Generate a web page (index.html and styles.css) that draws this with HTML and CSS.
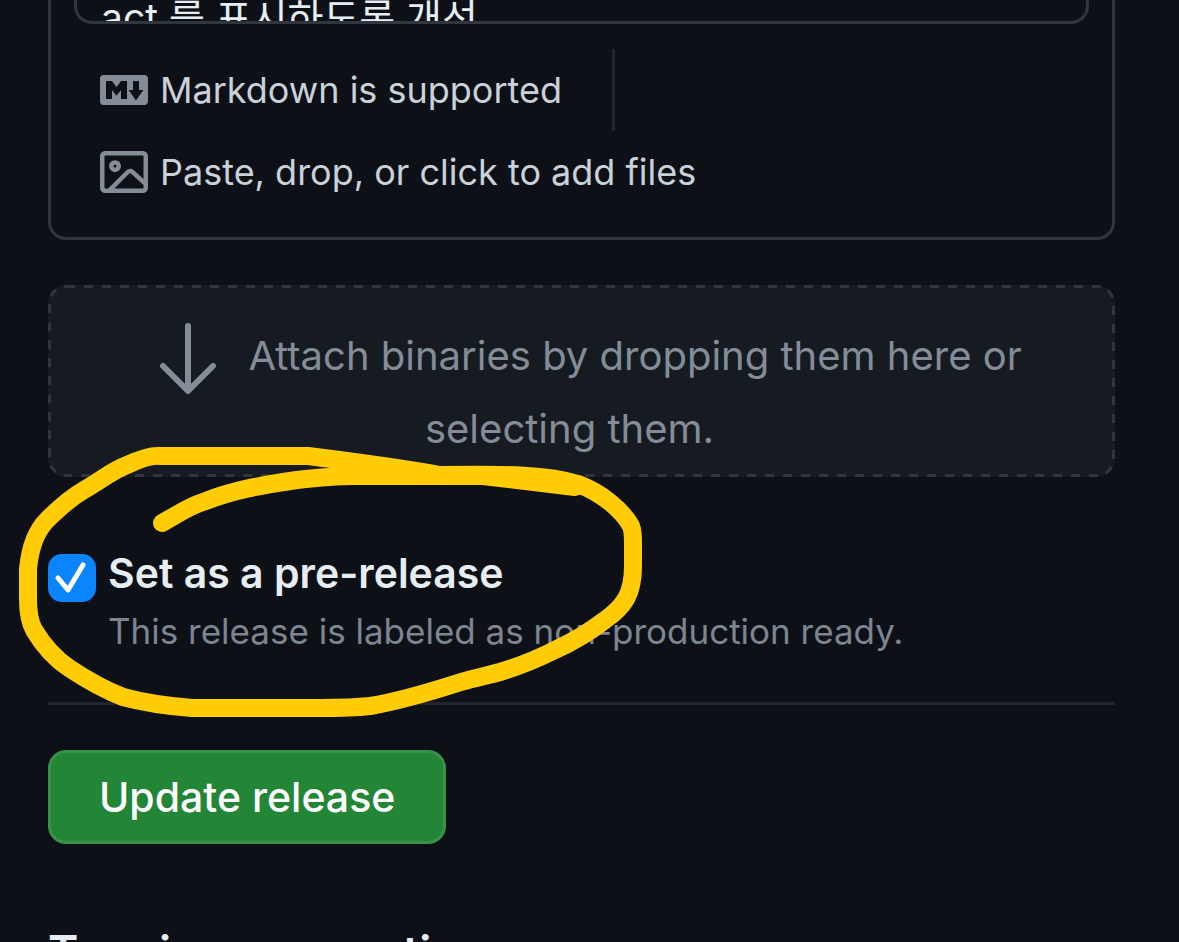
FILE: index.html
```html
<!DOCTYPE html>
<html lang="en">
<head>
  <meta charset="utf-8">
  <title>Edit release</title>
  <link rel="stylesheet" href="styles.css">
</head>
<body>
  <main class="page">
    <form>
      <div class="editor">
        <textarea class="editor-input" aria-label="Describe this release">act 를 표시하도록 개선</textarea>
        <div class="editor-footer">
          <a class="editor-link with-divider" href="#">
            <svg class="icon" viewBox="0 0 16 16" aria-hidden="true"><path d="M14.85 3c.63 0 1.15.52 1.14 1.15v7.7c0 .63-.51 1.15-1.15 1.15H1.15C.52 13 0 12.48 0 11.84V4.15C0 3.52.52 3 1.15 3ZM9 11V5H7L5.5 7 4 5H2v6h2V8l1.5 1.92L7 8v3Zm2.99.5L14.5 8H13V5h-2v3H9.5Z"/></svg>
            <span>Markdown is supported</span>
          </a>
          <button type="button" class="editor-link">
            <svg class="icon" viewBox="0 0 16 16" aria-hidden="true"><path d="M16 13.25A1.75 1.75 0 0 1 14.25 15H1.75A1.75 1.75 0 0 1 0 13.25V2.75C0 1.784.784 1 1.75 1h12.5c.966 0 1.75.784 1.75 1.75ZM1.75 2.5a.25.25 0 0 0-.25.25v10.5c0 .138.112.25.25.25h.94l.03-.03 6.077-6.078a1.75 1.75 0 0 1 2.412-.06L14.5 10.31V2.75a.25.25 0 0 0-.25-.25Zm12.5 11a.25.25 0 0 0 .25-.25v-.917l-4.298-3.889a.25.25 0 0 0-.344.009L4.81 13.5ZM7 6a2 2 0 1 1-3.999.001A2 2 0 0 1 7 6ZM5.5 6a.5.5 0 1 0-1 0 .5.5 0 0 0 1 0Z"/></svg>
            <span>Paste, drop, or click to add files</span>
          </button>
        </div>
      </div>

      <button type="button" class="dropzone">
        <svg class="dropzone-border" aria-hidden="true"><rect width="100%" height="100%" rx="18"/></svg>
        <svg class="dropzone-icon" viewBox="0 0 24 24" aria-hidden="true"><path d="M4.97 13.22a.75.75 0 0 1 1.06 0L11 18.19V3.75a.75.75 0 0 1 1.5 0v14.44l4.97-4.97a.749.749 0 0 1 1.275.326.749.749 0 0 1-.215.734l-6.25 6.25a.75.75 0 0 1-1.06 0l-6.25-6.25a.75.75 0 0 1 0-1.06Z"/></svg>
        <span class="dropzone-text">Attach binaries by dropping them here or selecting them.</span>
      </button>

      <div class="option">
        <span class="checkbox">
          <input type="checkbox" id="prerelease" aria-describedby="prerelease-note" checked>
          <svg viewBox="0 0 48 48" aria-hidden="true"><path d="M10 24l10 12L35 11"/></svg>
        </span>
        <div class="option-text">
          <label for="prerelease">Set as a pre-release</label>
          <p id="prerelease-note">This release is labeled as non-production ready.</p>
        </div>
        <!-- hand-drawn ring around the option -->
        <svg class="marker" viewBox="0 430 660 300" aria-hidden="true">
          <path d="M162 522C177 514 187 506 203 501C233 489 262 484 297 479C315 477 335 475 353 475H483L575 486"/>
          <path d="M440 474C510 473 548 474 578 483C602 492 622 509 631 525C633 530 633 536 633 542V565C633 592 625 605 605 619C592 629 577 639 555 649C537 658 517 666 500 671C485 675 474 677 461 681C433 690 401 700 370 705C352 707 335 707 320 707H192C167 705 145 702 123 696C105 689 84 677 69 667C54 657 43 644 34 629C29 620 28 610 28 598V568C30 547 36 530 47 519C59 507 70 497 84 489C100 480 113 469 127 464C140 458 151 454 160 455H308C340 459 400 467 440 474"/>
        </svg>
      </div>

      <hr>

      <button type="submit" class="btn-primary">Update release</button>
    </form>

    <h2>Tagging suggestions</h2>
  </main>
</body>
</html>
```

FILE: styles.css
```css
* {
  box-sizing: border-box;
}
html {
  height: 100%;
  overflow: hidden;
}
body {
  margin: 0;
  background-color: #0d1117;
  color: #e6edf3;
  font-family: Inter, "Noto Sans CJK KR", sans-serif;
  font-size: 41px;
}
.page {
  padding: 0 64px 0 48px;
}
button {
  font-family: inherit;
  cursor: pointer;
}

/* Description editor */
.editor {
  border: 3px solid #30363d;
  border-top: none;
  border-radius: 0 0 18px 18px;
  padding: 0 23px 24px;
}
.editor-input {
  display: block;
  width: 100%;
  height: 24px;
  padding: 0 24px;
  border: 3px solid #30363d;
  border-top: none;
  border-radius: 0 0 18px 18px;
  background: none;
  color: inherit;
  font-family: inherit;
  font-size: 39px;
  line-height: 36px;
  resize: none;
  overflow: hidden;
}
.editor-footer {
  display: flex;
  flex-direction: column;
  align-items: flex-start;
  margin-top: 25px;
}
.editor-link {
  display: flex;
  align-items: center;
  gap: 12px;
  height: 82px;
  padding: 0 50px 0 26px;
  border: none;
  background: none;
  color: #c9d1d9;
  font-size: 36px;
  text-decoration: none;
}
.with-divider {
  border-right: 3px solid #21262d;
}
.icon {
  width: 48px;
  height: 48px;
  fill: #848d97;
}

/* Attachments */
.dropzone {
  position: relative;
  display: block;
  width: 100%;
  margin-top: 45px;
  padding: 26px 48px;
  border: none;
  border-radius: 18px;
  background-color: #161b22;
  color: #848d97;
  font-size: 40px;
  line-height: 44px;
  text-align: center;
  overflow: hidden;
}
.dropzone-border {
  position: absolute;
  inset: 0;
  width: 100%;
  height: 100%;
  fill: none;
  stroke: #30363d;
  stroke-width: 6;
  stroke-dasharray: 9 9;
}
.dropzone-icon {
  width: 96px;
  height: 96px;
  vertical-align: middle;
  fill: #848d97;
}
.dropzone-text {
  padding-right: 24px;
}

/* Pre-release option */
.option {
  position: relative;
  display: flex;
  gap: 12px;
  margin-top: 68px;
}
.checkbox {
  display: grid;
  height: 48px;
  margin-top: 9px;
}
.checkbox input,
.checkbox svg {
  grid-area: 1 / 1;
  width: 48px;
  height: 48px;
  margin: 0;
}
.checkbox input {
  appearance: none;
  border-radius: 14px;
}
.checkbox input:checked {
  background-color: #0a84ff;
}
.checkbox svg {
  fill: none;
  stroke: #fff;
  stroke-width: 5;
  stroke-linecap: round;
  stroke-linejoin: round;
  pointer-events: none;
}
.option label {
  display: block;
  font-weight: 600;
  line-height: 56px;
}
.option p {
  margin: 0;
  color: #7d8590;
  font-size: 35px;
  line-height: 60px;
}
.marker {
  position: absolute;
  top: -114px;
  left: -48px;
  width: 660px;
  height: 300px;
  fill: none;
  stroke: #ffcc05;
  stroke-width: 18;
  stroke-linecap: round;
  stroke-linejoin: round;
  pointer-events: none;
}

hr {
  height: 3px;
  margin: 41px 0 45px;
  border: none;
  background-color: #21262d;
}
.btn-primary {
  display: block;
  height: 94px;
  padding: 0 48px;
  border: 3px solid #39914a;
  border-radius: 18px;
  background-color: #238636;
  color: #fff;
  font-size: 41px;
  font-weight: 500;
}
h2 {
  margin: 78px 0 0;
  font-size: 46px;
  font-weight: 600;
  line-height: 60px;
}
```
